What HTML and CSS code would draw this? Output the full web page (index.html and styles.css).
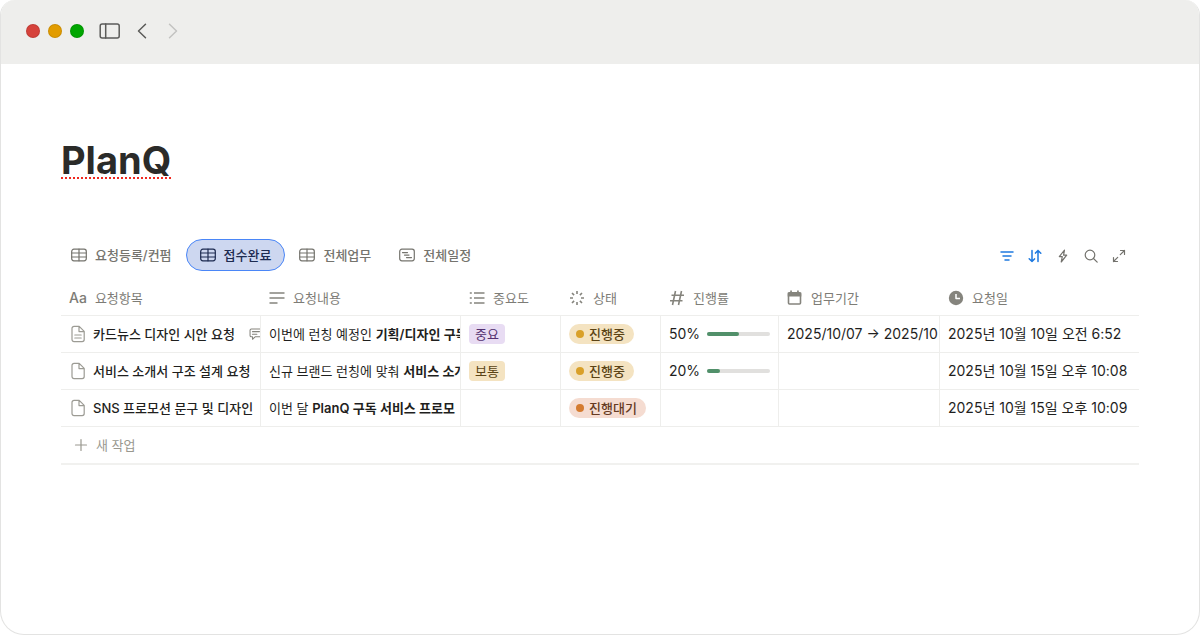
FILE: index.html
```
<!DOCTYPE html>
<html lang="ko">
<head>
    <meta charset="UTF-8">
    <meta name="viewport" content="width=device-width, initial-scale=1.0">
    <title>PlanQ</title>
    <link rel="stylesheet" href="styles.css">
</head>
<body>
    <svg class="sprite" aria-hidden="true">
        <symbol id="i-table" viewBox="0 0 16 16"><rect x="0.7" y="2.2" width="14.6" height="11.6" rx="2.2"/><path d="M.7 6h14.6M.7 10h14.6M8 2.2v11.6"/></symbol>
        <symbol id="i-timeline" viewBox="0 0 16 16"><rect x="0.7" y="2.2" width="14.6" height="11.6" rx="2.2"/><path d="M3.5 5.6h5M5.5 8.1h4.5M7.5 10.6h5"/></symbol>
        <symbol id="i-page" viewBox="0 0 16 18"><path d="M4 1.400h5.200l5 5v8.200a2 2 0 0 1-2 2H4a2 2 0 0 1-2-2V3.400a2 2 0 0 1 2-2zM9 1.600v5h5"/></symbol>
        <symbol id="i-lines" viewBox="0 0 16 18"><path d="M4.800 10h6.400M4.800 13h6.400"/></symbol>
    </svg>
    <div class="window">
        <header class="toolbar">
            <span class="dot red"></span>
            <span class="dot yellow"></span>
            <span class="dot green"></span>
            <button class="bar-btn sidebar" aria-label="사이드바"><svg width="22" height="18" viewBox="0 0 22 18"><rect x="1.200" y="2" width="19" height="14" rx="2"/><path d="M6.700 2v14"/></svg></button>
            <button class="bar-btn back" aria-label="뒤로"><svg width="10" height="16" viewBox="0 0 10 16"><path d="M8.500 1.300 1.500 8l7 6.700"/></svg></button>
            <button class="bar-btn forward" aria-label="앞으로" disabled><svg width="10" height="16" viewBox="0 0 10 16"><path d="M1.500 1.300 8.500 8l-7 6.700"/></svg></button>
        </header>
        <main class="page">
            <h1><span>PlanQ</span></h1>
            <div class="views">
                <nav class="tabs">
                    <button class="tab"><svg class="icon"><use href="#i-table"/></svg>요청등록/컨펌</button>
                    <button class="tab active"><svg class="icon"><use href="#i-table"/></svg>접수완료</button>
                    <button class="tab"><svg class="icon"><use href="#i-table"/></svg>전체업무</button>
                    <button class="tab"><svg class="icon"><use href="#i-timeline"/></svg>전체일정</button>
                </nav>
                <div class="tools">
                    <button class="tool on" aria-label="필터"><svg class="icon" viewBox="0 0 16 16"><path d="M2 4h12M4 8h8M6 12h4"/></svg></button>
                    <button class="tool on" aria-label="정렬"><svg class="icon" viewBox="0 0 16 16"><path d="M5 2.500v11M2.200 10.700 5 13.500l2.500-2.600M11 13.500v-11M8.500 5.100 11 2.500l2.800 2.800"/></svg></button>
                    <button class="tool" aria-label="자동화"><svg class="icon" viewBox="0 0 16 16"><path d="M9.500 2 4.300 8.600h3L6.200 14l5.500-6.800H8.600z"/></svg></button>
                    <button class="tool" aria-label="검색"><svg class="icon" viewBox="0 0 16 16"><circle cx="7" cy="7" r="4.800"/><path d="m10.500 10.500 3.700 3.700"/></svg></button>
                    <button class="tool" aria-label="확장"><svg class="icon" viewBox="0 0 16 16"><path d="M9.300 6.700l4.200-4.200M9.500 2.500h4v4M6.700 9.300l-4.200 4.200M2.500 9.500v4h4"/></svg></button>
                </div>
            </div>
            <table>
                <colgroup>
                    <col class="c-name"><col class="c-text"><col class="c-prio"><col class="c-state"><col class="c-prog"><col class="c-term"><col>
                </colgroup>
                <thead>
                    <tr>
                        <th><div class="head"><span class="aa">Aa</span>요청항목</div></th>
                        <th><div class="head"><svg class="icon bold" viewBox="0 0 16 16"><path d="M.5 3h15M.5 8h15M.5 13h8"/></svg>요청내용</div></th>
                        <th><div class="head"><svg class="icon bold" viewBox="0 0 16 16"><path d="M5 3h10.500M5 8h10.500M5 13h10.500M.8 3h2M.8 8h2M.8 13h2"/></svg>중요도</div></th>
                        <th><div class="head"><svg class="icon bold" viewBox="0 0 16 16"><path d="M8 1v3M8 12v3M1 8h3M12 8h3M3 3l2.100 2.100M10.900 10.900 13 13M3 13l2.100-2.100M10.900 5.100 13 3"/></svg>상태</div></th>
                        <th><div class="head"><svg class="icon bold" viewBox="0 0 16 16"><path d="M6.500 1 3.500 15M12.500 1l-3 14M2.500 5.300h12.500M1 10.700h12.500"/></svg>진행률</div></th>
                        <th><div class="head"><svg class="icon bold" viewBox="0 0 16 16"><rect x="1.500" y="2.700" width="12" height="11.300" rx="1"/><path class="fill" d="M.7 2.500h13.600v4H.7zM3.200 .5h1.700v3H3.200zM10.100 .5h1.700v3h-1.700z"/></svg>업무기간</div></th>
                        <th><div class="head"><svg class="icon" viewBox="0 0 16 16"><circle class="fill" cx="8" cy="8" r="7.200"/><path class="hand" d="M8 4v4.500h4"/></svg>요청일</div></th>
                    </tr>
                </thead>
                <tbody>
                    <tr>
                        <td><div class="name"><svg class="doc"><use href="#i-page"/><use href="#i-lines"/></svg><span>카드뉴스 디자인 시안 요청</span><svg class="comment" viewBox="0 0 16 16"><path d="M2.700 2.200h10.600a1.500 1.500 0 0 1 1.500 1.500v6a1.500 1.500 0 0 1-1.500 1.500H7l-3 2.800v-2.800H2.700a1.500 1.500 0 0 1-1.500-1.500v-6a1.500 1.500 0 0 1 1.500-1.500zM4 5.300h8M4 8.200h5"/></svg></div></td>
                        <td>이번에 런칭 예정인 <b>기획/디자인 구독</b></td>
                        <td><span class="tag purple">중요</span></td>
                        <td><div class="status yellow">진행중</div></td>
                        <td><div class="progress"><span class="num">50%</span><span class="track"><span class="value" style="width: 50%"></span></span></div></td>
                        <td class="num">2025/10/07 → 2025/10</td>
                        <td class="num">2025년 10월 10일 오전 6:52</td>
                    </tr>
                    <tr>
                        <td><div class="name"><svg class="doc"><use href="#i-page"/></svg><span>서비스 소개서 구조 설계 요청</span></div></td>
                        <td>신규 브랜드 런칭에 맞춰 <b>서비스 소개</b></td>
                        <td><span class="tag yellow">보통</span></td>
                        <td><div class="status yellow">진행중</div></td>
                        <td><div class="progress"><span class="num">20%</span><span class="track"><span class="value" style="width: 20%"></span></span></div></td>
                        <td></td>
                        <td class="num">2025년 10월 15일 오후 10:08</td>
                    </tr>
                    <tr>
                        <td><div class="name"><svg class="doc"><use href="#i-page"/></svg><span>SNS 프로모션 문구 및 디자인</span></div></td>
                        <td>이번 달 <b>PlanQ 구독 서비스 프로모</b></td>
                        <td></td>
                        <td><div class="status orange">진행대기</div></td>
                        <td></td>
                        <td></td>
                        <td class="num">2025년 10월 15일 오후 10:09</td>
                    </tr>
                </tbody>
            </table>
            <button class="new-row"><svg class="icon" viewBox="0 0 16 16"><path d="M8 2.500v11M2.500 8h11"/></svg>새 작업</button>
        </main>
    </div>
</body>
</html>
```
FILE: styles.css
```
* { box-sizing: border-box; }
body { margin: 0; background: #fff; color: #1f1f1e; font: 13px/20px Inter, "Noto Sans CJK KR", sans-serif; }
button { margin: 0; padding: 0; border: 0; background: none; color: inherit; font: inherit; }
svg { fill: none; stroke: currentColor; stroke-width: 1.2; stroke-linejoin: round; stroke-linecap: round; flex: none; }
.sprite { display: none; }
.icon { width: 16px; height: 16px; }
.bold { stroke-width: 1.6; stroke-linecap: butt; }
.fill { fill: currentColor; stroke: none; }

/* window frame */
.window { min-height: 100vh; border: 1px solid #e3e3e2; border-top: 0; border-radius: 15px 15px 24px 24px; overflow: hidden; }
.toolbar { display: flex; align-items: center; gap: 8px; height: 64px; margin: 0 -1px; padding: 0 26px 2px; background: #eeeeec; }
.dot { width: 14px; height: 14px; border: 1px solid rgba(0, 0, 0, 0.1); border-radius: 50%; }
.dot.red { background: #d6423b; }
.dot.yellow { background: #e29c00; }
.dot.green { background: #00a600; }
.bar-btn { display: flex; color: #5b5b59; }
.bar-btn svg { stroke-width: 1.5; }
.sidebar { margin-left: 7px; }
.back { margin-left: 8px; }
.forward { margin-left: 13px; color: #c3c3c1; }

.page { padding: 73px 60px 40px; }
h1 { margin: 0; font-size: 38px; line-height: 48px; font-weight: 700; color: #2b2b29; }
h1 span { display: block; width: max-content; height: 42px; line-height: 46px; border-bottom: 2px dotted #f0281e; }

/* view tabs */
.views { display: flex; justify-content: space-between; align-items: center; margin-top: 60px; }
.tabs { display: flex; margin-left: -4px; }
.tab { display: flex; align-items: center; gap: 8px; height: 32px; padding: 0 13px; border: 1px solid transparent; border-radius: 16px; color: #75746e; font-weight: 500; white-space: nowrap; }
.tab.active { border-color: #4a86f7; background: #cdd7f0; color: #1d2b50; }
.tools { display: flex; gap: 12px; margin-right: 12px; padding-top: 2px; color: #73726d; }
.tool { display: flex; }
.tool.on { color: #1f7ae0; }
.tool.on .icon { stroke-width: 1.5; }

/* table */
table { width: 100%; margin-top: 10px; border-collapse: separate; border-spacing: 0; table-layout: fixed; }
.c-name, .c-text { width: 200px; }
.c-prio, .c-state { width: 100px; }
.c-prog { width: 118px; }
.c-term { width: 161px; }
th, td { padding: 0 0 0 8px; border-bottom: 1px solid #eeeeec; text-align: left; white-space: nowrap; overflow: hidden; }
th { height: 35px; color: #7d7c76; font-weight: 400; }
td { height: 37px; border-right: 1px solid #eeeeec; }
td:last-child { border-right: 0; }
.head { display: flex; align-items: center; gap: 8px; }
.head .icon { color: #85847d; }
.aa { font-size: 14px; font-weight: 500; }
.hand { stroke: #fff; stroke-width: 1.5; stroke-linecap: butt; }
.num { font-size: 14px; }
b { font-weight: 600; }

.name { display: flex; align-items: center; gap: 7px; font-weight: 500; }
.doc { width: 16px; height: 18px; margin-left: 1px; color: #9c9b94; }
.comment { width: 14px; height: 14px; margin-left: 7px; color: #85847d; }
.tag { display: inline-block; padding: 0 6px; border-radius: 4px; }
.tag.purple { background: #e8dcf3; color: #53306f; }
.tag.yellow { background: #f4e3c1; color: #5b4315; }
.status { display: flex; width: max-content; align-items: center; gap: 5px; padding: 0 9px 0 7px; border-radius: 10px; font-weight: 500; }
.status::before { content: ""; width: 8px; height: 8px; border-radius: 50%; }
.status.yellow { background: #f4e3c1; color: #5b4315; }
.status.yellow::before { background: #d9a029; }
.status.orange { background: #f5dcd1; color: #663a22; }
.status.orange::before { background: #d47b30; }
.progress { display: flex; align-items: center; gap: 7px; padding-right: 8px; }
.track { flex: 1; height: 4px; border-radius: 2px; background: #e1e0de; }
.value { display: block; height: 4px; border-radius: 2px; background: #51906a; }

.new-row { display: flex; align-items: center; gap: 7px; width: 100%; height: 38px; padding-left: 12px; border-bottom: 2px solid #f1f1ef; color: #99988f; }
```
